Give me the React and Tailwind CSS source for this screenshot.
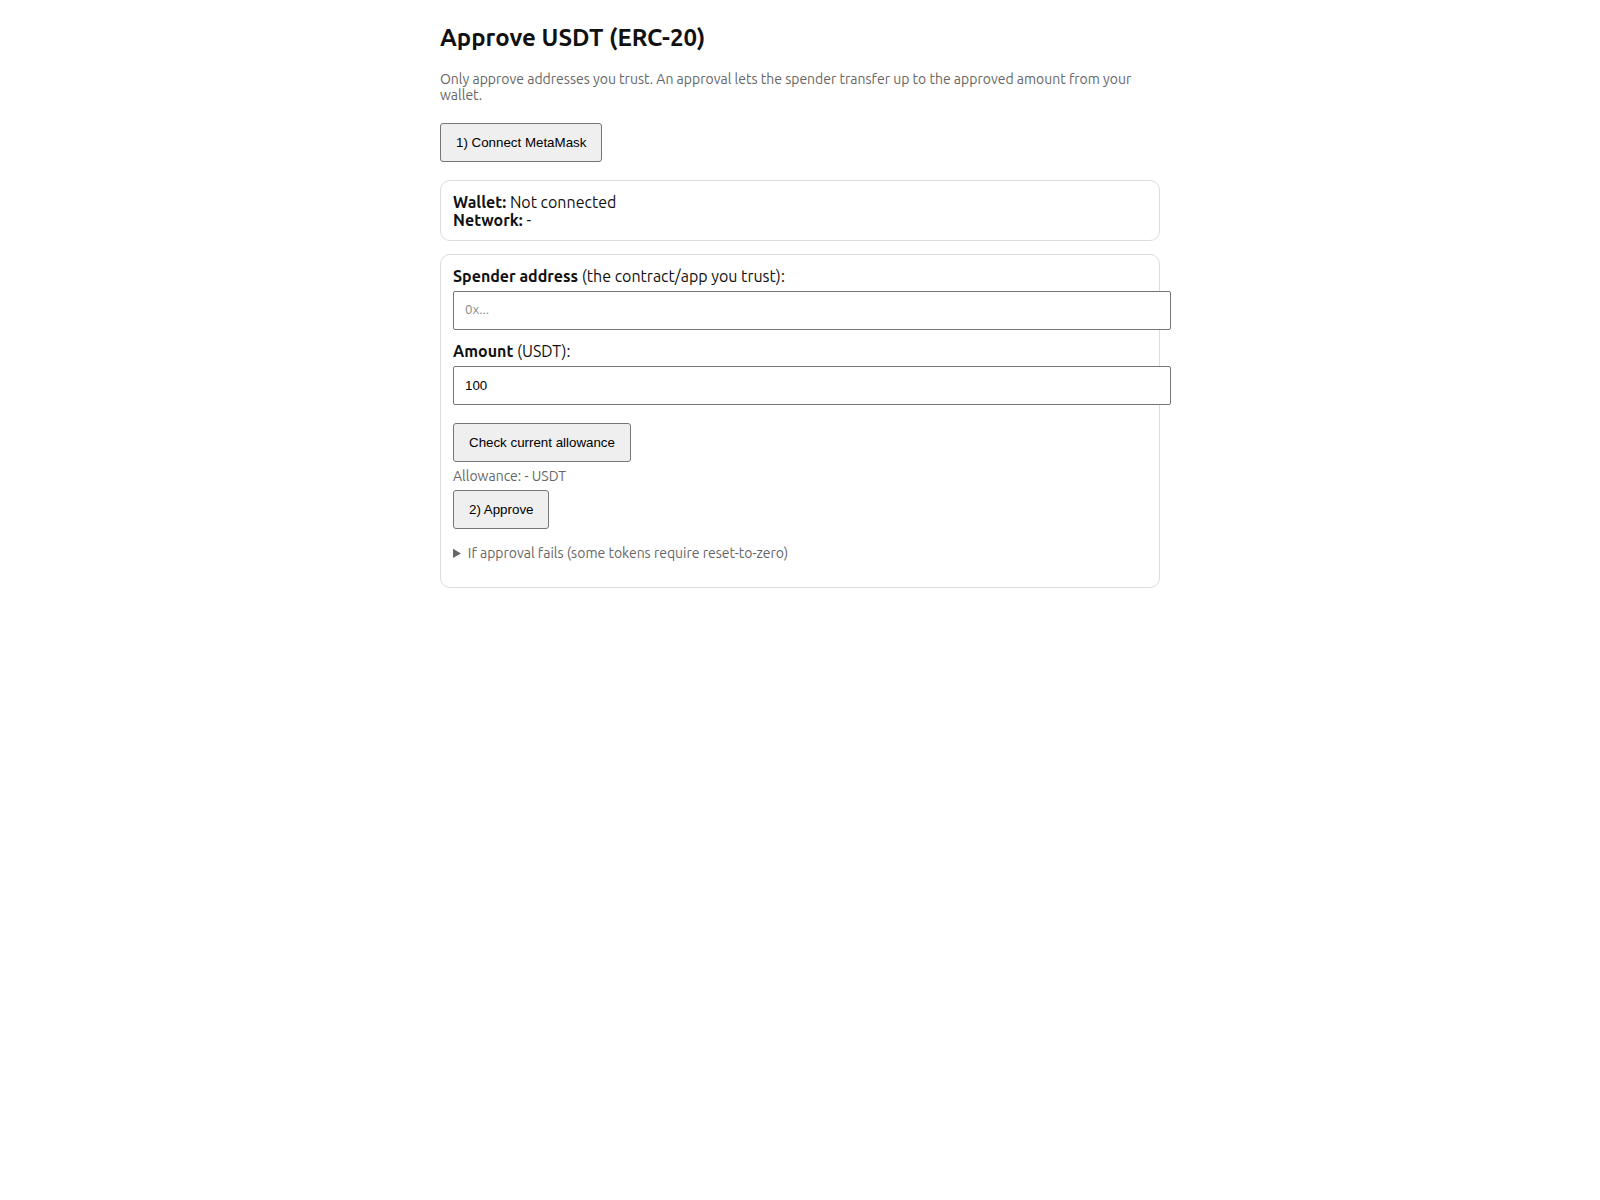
import { useState } from "react";

const sans = "font-['Ubuntu',system-ui,sans-serif]";
const btn =
  "rounded-[3px] border border-[#767676] bg-[#efefef] px-[15px] pt-[1px] h-[39px] font-['Liberation_Sans',Arial,sans-serif] text-[13.333px] text-black";
const field =
  "block box-content w-full h-[17px] py-[10px] px-[11px] border border-[#767676] rounded-[2px] bg-white font-['Liberation_Sans',Arial,sans-serif] text-[13.333px] text-black outline-none placeholder:text-[#8a8a8a] placeholder:font-['Ubuntu',system-ui,sans-serif]";

export default function App() {
  const [spender, setSpender] = useState("");
  const [amount, setAmount] = useState("100");

  return (
    <div className={`min-h-screen bg-white ${sans} text-[#111]`}>
      <div className="mx-auto w-[720px] pt-[24px]">
        <h2 className="text-[24px] font-bold leading-[1.15]">Approve USDT (ERC-20)</h2>
        <p className="mt-[19px] text-[14px] leading-[1.15] text-[#666]">
          Only approve addresses you trust. An approval lets the spender transfer up to the approved amount from your
          wallet.
        </p>

        <button className={`mt-[20px] ${btn}`}>1) Connect MetaMask</button>

        {/* wallet status */}
        <div className="mt-[18px] rounded-[10px] border border-[#dcdcdc] px-3 pt-3 pb-[10px] text-[16px] leading-[1.15]">
          <div>
            <b>Wallet:</b> Not connected
          </div>
          <div>
            <b>Network:</b> -
          </div>
        </div>

        {/* approve form */}
        <div className="mt-[13px] rounded-[10px] border border-[#dcdcdc] p-3">
          <label className="block text-[16px] leading-[1.15]">
            <b>Spender address</b> (the contract/app you trust):
          </label>
          <input
            className={`mt-[6px] ${field}`}
            placeholder="0x..."
            value={spender}
            onChange={(e) => setSpender(e.target.value)}
          />

          <label className="mt-3 block text-[16px] leading-[1.15]">
            <b>Amount</b> (USDT):
          </label>
          <input className={`mt-[6px] ${field}`} value={amount} onChange={(e) => setAmount(e.target.value)} />

          <button className={`mt-[18px] ${btn}`}>Check current allowance</button>
          <div className="mt-[6px] text-[14px] leading-[1.15] text-[#666]">Allowance: - USDT</div>
          <button className={`mt-[6px] ${btn}`}>2) Approve</button>

          <details className="mt-[16px] mb-[13px] text-[14px] leading-[1.15] text-[#666]">
            <summary className="cursor-pointer">If approval fails (some tokens require reset-to-zero)</summary>
          </details>
        </div>
      </div>
    </div>
  );
}
